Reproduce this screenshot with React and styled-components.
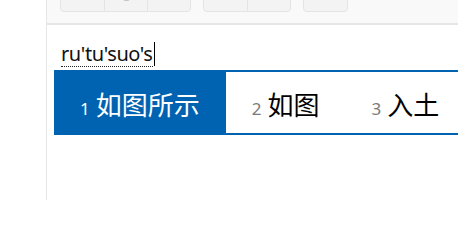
import React from "react";
import styled, { createGlobalStyle } from "styled-components";

const GlobalStyle = createGlobalStyle`
  html, body {
    margin: 0;
    padding: 0;
    background: #ffffff;
    font-family: "Noto Sans", "Noto Sans CJK SC", sans-serif;
  }
`;

const Page = styled.div`
  display: flex;
  width: 458px;
  height: 200px;
  overflow: hidden;
`;

const Sidebar = styled.div`
  width: 46px;
  flex-shrink: 0;
  border-right: 1px solid #e6e6e6;
`;

const Main = styled.div`
  flex: 1;
  display: flex;
  flex-direction: column;
  min-width: 0;
`;

const Toolbar = styled.div`
  height: 25px;
  display: flex;
  align-items: flex-end;
  gap: 12px;
  padding: 0 0 11px 13px;
  box-sizing: border-box;
  background: #f9f9f9;
  border-bottom: 2px solid #e6e6e6;
  overflow: hidden;
`;

const ButtonGroup = styled.div`
  display: flex;
  flex-shrink: 0;
  height: 32px;
  border: 1px solid #e4e4e4;
  border-radius: 4px;
  background: #f3f3f3;
  overflow: hidden;
`;

const ToolButton = styled.div`
  width: ${(p) => p.$w || 43}px;
  display: flex;
  align-items: flex-end;
  justify-content: center;
  padding-bottom: 9px;
  box-sizing: border-box;
  & + & {
    border-left: 1px solid #e4e4e4;
  }
`;

const Editor = styled.div`
  padding: 15px 0 0 7px;
  display: flex;
  flex-direction: column;
`;

const InputLine = styled.div`
  height: 28px;
  padding-left: 7px;
  display: flex;
  align-items: center;
`;

const Composition = styled.span`
  font-family: "Noto Sans", sans-serif;
  font-size: 20px;
  line-height: 24px;
  color: #111;
  border-bottom: 1px dotted #222;
  letter-spacing: -0.4px;
`;

const Caret = styled.span`
  width: 1px;
  height: 24px;
  margin-left: 1px;
  background: #000;
`;

const CandidateBar = styled.div`
  margin-top: 2px;
  height: 65px;
  display: flex;
  box-sizing: border-box;
  border-top: 2px solid #0063b1;
  border-bottom: 2px solid #0063b1;
`;

const Candidate = styled.div`
  display: flex;
  flex-shrink: 0;
  white-space: nowrap;
  align-items: baseline;
  gap: 6px;
  padding: 0 26px;
  margin: ${(p) => (p.$selected ? "-2px 0" : "0")};
  padding-top: ${(p) => (p.$selected ? "19px" : "17px")};
  background: ${(p) => (p.$selected ? "#0063b1" : "transparent")};
  color: ${(p) => (p.$selected ? "#ffffff" : "#000000")};
`;

const Index = styled.span`
  font-family: "Noto Sans", sans-serif;
  font-size: 17px;
  color: ${(p) => (p.$selected ? "#ffffff" : "#7a7a7a")};
`;

const Word = styled.span`
  font-family: "Noto Sans CJK SC", "Noto Sans", sans-serif;
  font-size: 26px;
  line-height: 30px;
`;

const candidates = ["如图所示", "如图", "入土"];

export default function App() {
  return (
    <>
      <GlobalStyle />
      <Page>
        <Sidebar />
        <Main>
          <Toolbar>
            <ButtonGroup>
              <ToolButton $w={43} />
              <ToolButton $w={43}>
                <svg width="7" height="12" viewBox="0 0 7 12">
                  <rect x="0.5" y="0" width="6" height="11" rx="2" fill="#c4c4c4" />
                </svg>
              </ToolButton>
              <ToolButton $w={43} />
            </ButtonGroup>
            <ButtonGroup>
              <ToolButton $w={43} />
              <ToolButton $w={43} />
            </ButtonGroup>
            <ButtonGroup>
              <ToolButton $w={43} />
            </ButtonGroup>
          </Toolbar>
          <Editor>
            <InputLine>
              <Composition>ru'tu'suo's</Composition>
              <Caret />
            </InputLine>
            <CandidateBar>
              {candidates.map((c, i) => (
                <Candidate key={c} $selected={i === 0}>
                  <Index $selected={i === 0}>{i + 1}</Index>
                  <Word>{c}</Word>
                </Candidate>
              ))}
            </CandidateBar>
          </Editor>
        </Main>
      </Page>
    </>
  );
}
